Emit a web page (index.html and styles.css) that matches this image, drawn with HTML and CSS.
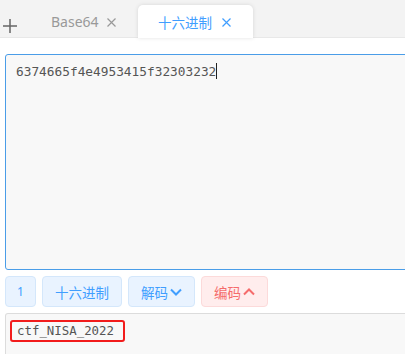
FILE: index.html
```html
<!DOCTYPE html>
<html lang="zh">
<head>
  <meta charset="UTF-8" />
  <title>编码转换</title>
  <link rel="stylesheet" href="styles.css">
</head>
<body>

  <div class="tab-bar">
    <span class="tab-add">
      <svg width="14" height="14" viewBox="0 0 14 14"><path d="M7 0v14M0 7h14" stroke="#666" stroke-width="1.5"/></svg>
    </span>
    <div class="tab">Base64<svg class="tab-close" width="9" height="9" viewBox="0 0 9 9"><path d="M0.5 0.5l8 8M8.5 0.5l-8 8" stroke="#999" stroke-width="1.2"/></svg></div>
    <div class="tab active">十六进制<svg class="tab-close" width="9" height="9" viewBox="0 0 9 9"><path d="M0.5 0.5l8 8M8.5 0.5l-8 8" stroke="#409eff" stroke-width="1.2"/></svg></div>
  </div>

  <main class="panel">
    <div class="input-box">6374665f4e4953415f32303232<span class="caret"></span></div>

    <div class="toolbar">
      <button class="btn">1</button>
      <button class="btn">十六进制</button>
      <button class="btn">解码<svg class="chev" width="12" height="8" viewBox="0 0 12 8"><path d="M1 1.5l5 5 5-5" fill="none" stroke="#409eff" stroke-width="2"/></svg></button>
      <button class="btn btn-red">编码<svg class="chev" width="12" height="8" viewBox="0 0 12 8"><path d="M1 6.5l5-5 5 5" fill="none" stroke="#f56c6c" stroke-width="2"/></svg></button>
    </div>

    <div class="output-box">
      <span class="result">ctf_NISA_2022</span>
    </div>
  </main>

</body>
</html>
```

FILE: styles.css
```css
* {
  margin: 0;
  padding: 0;
  box-sizing: border-box;
}

html, body {
  width: 405px;
  height: 354px;
  overflow: hidden;
  background: white;
  font-family: "Noto Sans", "Noto Sans CJK SC", sans-serif;
}

.tab-bar {
  height: 38px;
  background: #f3f3f3;
  display: flex;
  align-items: flex-end;
  box-shadow: inset 0 -1px 0 #e8e8e8;
}

.tab-add {
  width: 51px;
  height: 33px;
  padding-left: 3px;
  padding-top: 9px;
  display: flex;
  align-items: center;
}

.tab {
  height: 33px;
  display: flex;
  align-items: center;
  font-size: 14px;
  color: #999;
  width: 87px;
}

.tab-close {
  margin-left: 8px;
  margin-top: 1px;
}

.tab.active {
  width: 115px;
  background: white;
  color: #409eff;
  padding-left: 20px;
  font-size: 13.5px;
  border-radius: 5px 5px 0 0;
  box-shadow: 0 0 4px rgba(0, 0, 0, 0.12);
}

.tab.active .tab-close {
  margin-left: 10px;
}

.panel {
  padding: 16px 0 0 5px;
}

.input-box {
  width: 420px;
  height: 216px;
  border: 1px solid #4a9de8;
  border-radius: 3px;
  background: #f8f8f8;
  padding: 8px 10px;
  font-family: "DejaVu Sans Mono", monospace;
  font-size: 12.8px;
  color: #555;
}

.caret {
  display: inline-block;
  width: 1px;
  height: 16px;
  background: #222;
  vertical-align: -3px;
}

.toolbar {
  display: flex;
  gap: 6px;
  margin-top: 6px;
}

.btn {
  height: 31px;
  padding: 0 12px;
  border: 1px solid #d4e7fb;
  border-radius: 4px;
  background: #e9f3ff;
  color: #409eff;
  font-family: "Noto Sans", "Noto Sans CJK SC", sans-serif;
  font-size: 13.5px;
  display: flex;
  align-items: center;
}

.btn:first-child {
  width: 31px;
  justify-content: center;
  padding: 0;
  font-size: 12px;
}

.btn-red {
  background: #ffeded;
  border-color: #fcdada;
  color: #f56c6c;
}

.chev {
  margin-left: 2px;
}

.output-box {
  margin-top: 6px;
  width: 420px;
  height: 41px;
  border: 1px solid #dcdcdc;
  border-bottom: none;
  border-radius: 3px 3px 0 0;
  background: #f8f8f8;
  padding: 4px 4px;
}

.result {
  display: inline-block;
  border: 2px solid #f21c1c;
  border-radius: 3px;
  padding: 1px 9px 2px 5px;
  font-family: "DejaVu Sans Mono", monospace;
  font-size: 12.4px;
  color: #555;
}
```
